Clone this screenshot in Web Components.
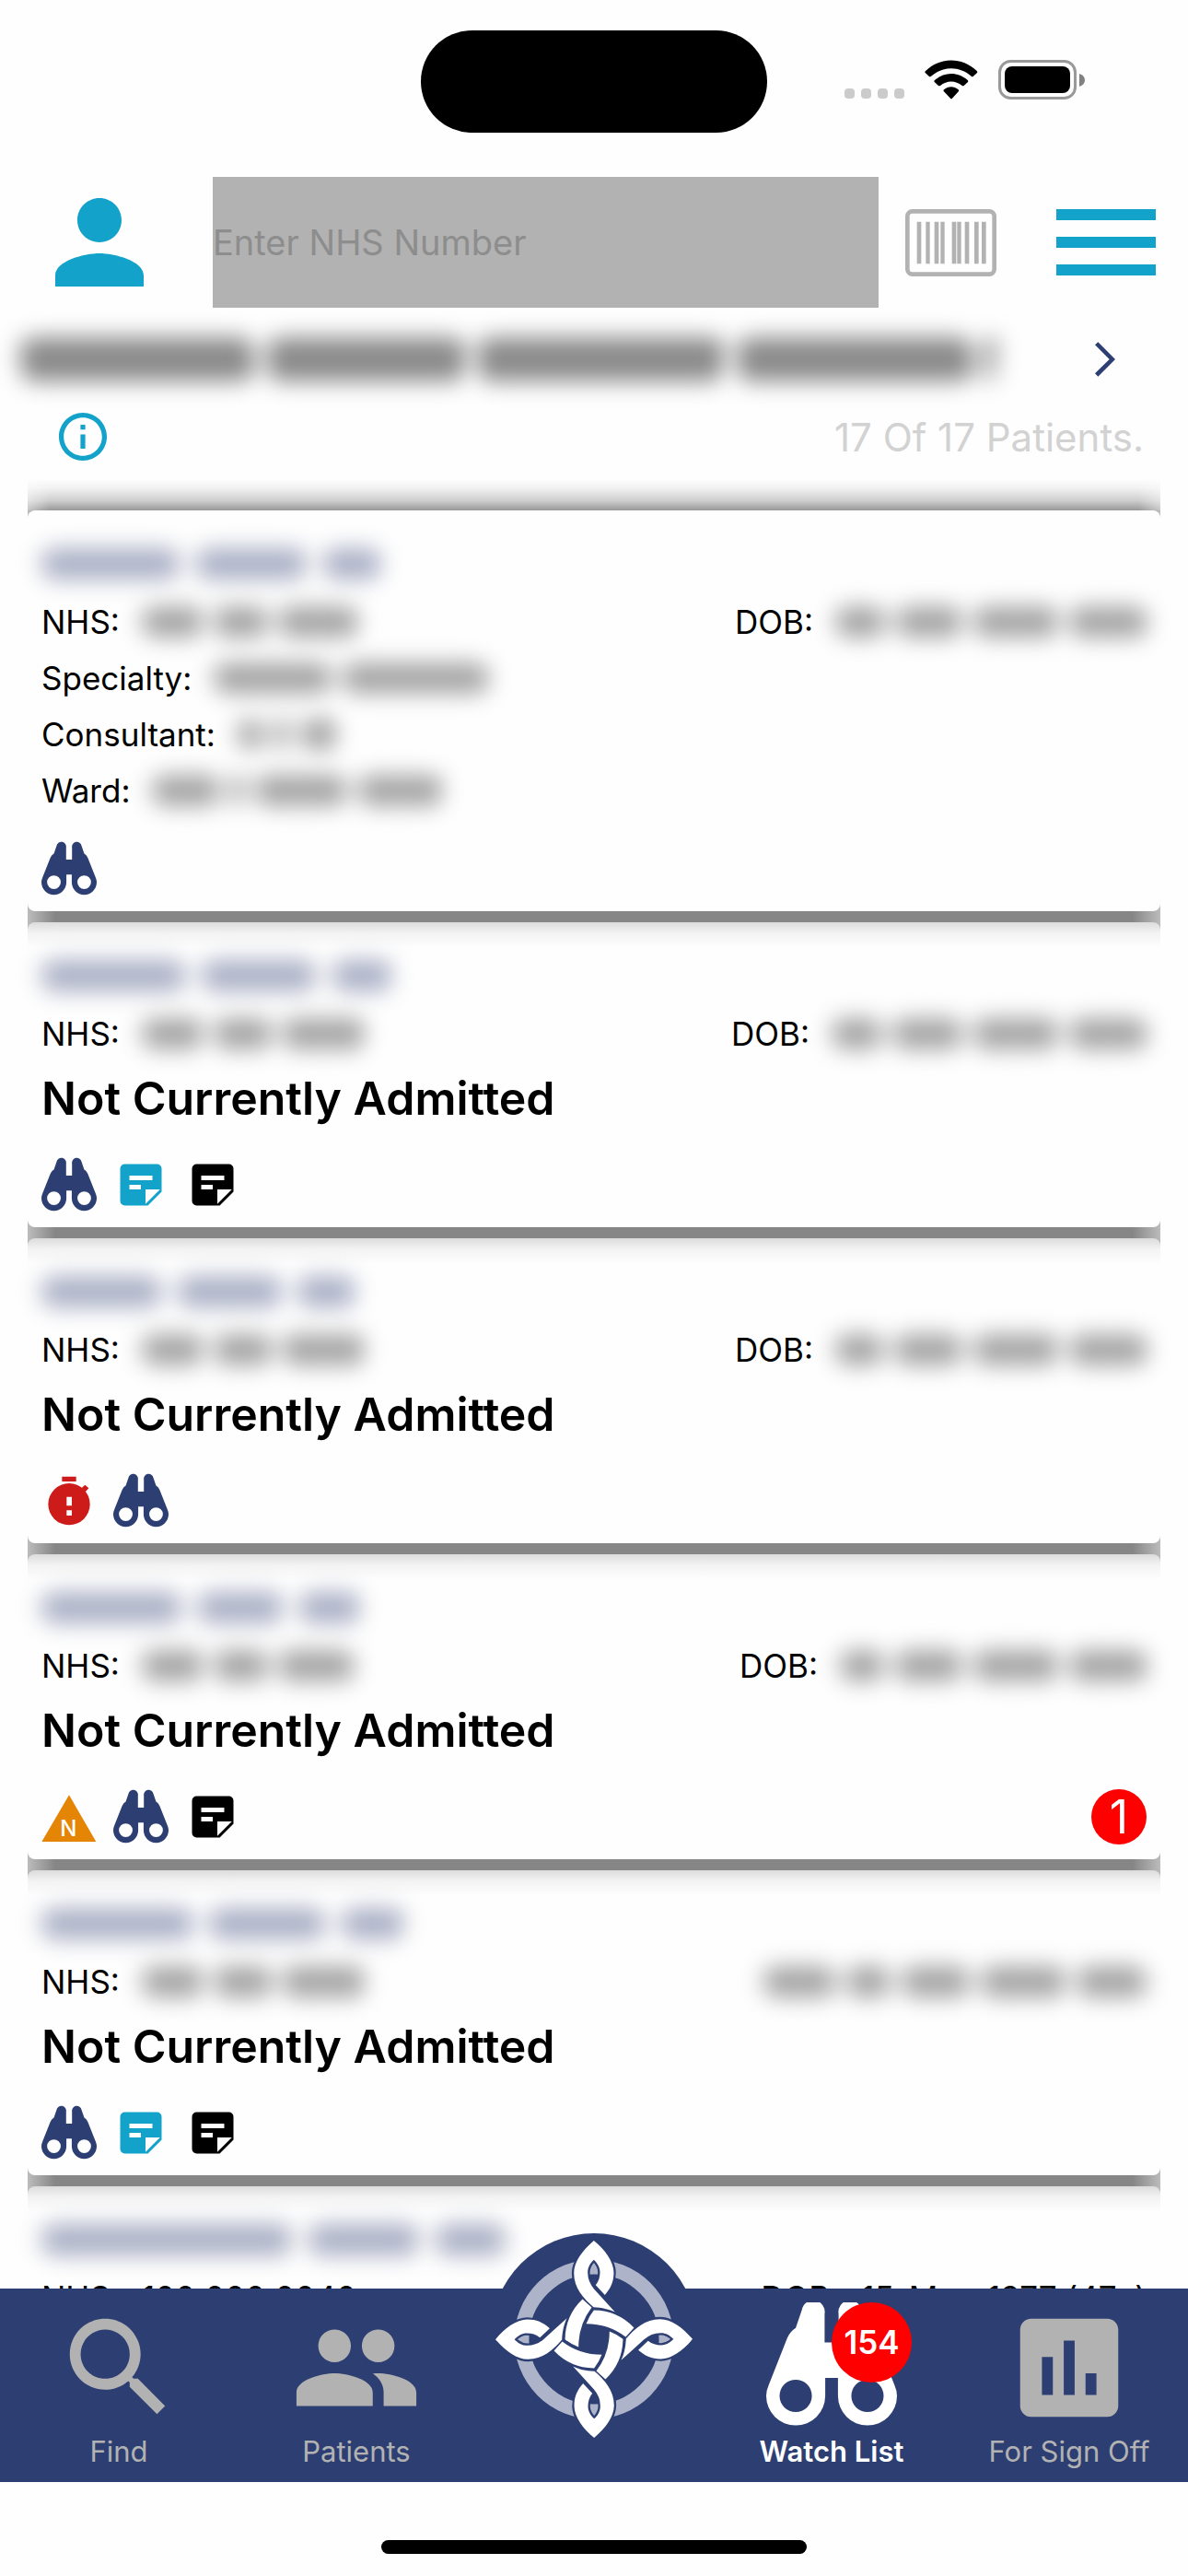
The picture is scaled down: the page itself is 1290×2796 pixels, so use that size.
<!DOCTYPE html>
<html lang="en">
<head>
<meta charset="utf-8">
<meta name="viewport" content="width=device-width, initial-scale=1">
<title>Watch List</title>
<style>
    html, body {
        margin: 0;
        height: 100%;
    }
    body {
        background: #fefefe;
        color: #000;
        font-family: Inter, "Liberation Sans", sans-serif;
        --navy: #2d3e72;
        --cyan: #13a3ca;
        --grey: #b2b2b2;
        --red: #fe0000;
    }
</style>
</head>
<body>

<watch-app></watch-app>

<template id="watch-app-template">
    <style>
        :host {
            display: flex;
            flex-direction: column;
            height: 100vh;
            overflow: hidden;
        }
        main {
            flex: 1;
            min-height: 0;
            overflow: hidden;
        }
        .home {
            display: flex;
            justify-content: center;
            padding: 63px 0 24px;
        }
        .home span {
            width: 462px;
            height: 15px;
            border-radius: 8px;
            background: #000;
        }
    </style>
    <status-bar></status-bar>
    <search-header></search-header>
    <list-summary count="17 Of 17 Patients."></list-summary>
    <main><patient-list></patient-list></main>
    <tab-bar></tab-bar>
    <div class="home"><span></span></div>
</template>

<template id="status-bar-template">
    <style>
        :host {
            display: grid;
            grid-template-columns: 1fr 376px 1fr;
            align-items: center;
            height: 177px;
            box-sizing: border-box;
        }
        .island {
            grid-column: 2;
            height: 111px;
            border-radius: 56px;
            background: #000;
        }
        .signals {
            display: flex;
            align-items: center;
            justify-content: flex-end;
            gap: 22px;
            padding: 0 112px 4px 0;
        }
        svg {
            display: block;
        }
    </style>
    <div class="island"></div>
    <div class="signals">
        <svg width="65" height="43" viewBox="0 0 65 43" fill="#cbcbcb">
            <rect x="0" y="31" width="11" height="11" rx="4"/>
            <rect x="18" y="31" width="11" height="11" rx="4"/>
            <rect x="36" y="31" width="11" height="11" rx="4"/>
            <rect x="54" y="31" width="11" height="11" rx="4"/>
        </svg>
        <svg width="58" height="43" viewBox="0 0 174 129">
            <path d="M2 42Q0 39 3 36C50-10 122-10 170 36Q173 39 171 42L158 54Q155 56 152 53C114 19 60 19 21 53Q18 56 15 54Z"/>
            <path d="M32 72Q30 69 33 66C64 38 109 38 140 66Q143 69 141 72L128 84Q125 86 122 84C101 66 72 66 51 84Q48 86 45 84Z"/>
            <path d="M62 102Q60 99 63 97C77 85 96 85 110 97Q113 99 111 102L90 125Q87 128 84 125Z"/>
        </svg>
        <svg width="94" height="43" viewBox="0 0 94 43">
            <rect x="1.500" y="1.500" width="82" height="40" rx="12" fill="none" stroke="#999" stroke-width="3"/>
            <rect x="7" y="7" width="71" height="29" rx="8"/>
            <path d="M88 15q6 2 6 7t-6 7z" fill="#808080"/>
        </svg>
    </div>
</template>

<template id="search-header-template">
    <style>
        :host {
            display: block;
            padding: 14px 0 0;
        }
        form {
            display: grid;
            grid-template-columns: 216px 1fr 127px 179px;
            column-gap: 15px;
            align-items: center;
            justify-items: center;
            height: 142px;
        }
        button {
            display: block;
            padding: 0;
            border: 0;
            background: none;
            color: var(--cyan);
        }
        svg {
            display: block;
        }
        input {
            width: 100%;
            height: 142px;
            box-sizing: border-box;
            padding: 0;
            border: 0;
            border-radius: 0;
            background: var(--grey);
            font: 38px Inter, sans-serif;
        }
        input::placeholder {
            color: #8d8d8d;
            opacity: 1;
        }
    </style>
    <form>
        <button type="button" aria-label="Profile">
            <svg width="144" height="144" viewBox="0 0 24 24" fill="currentColor"><path d="M12 12c2.210 0 4-1.790 4-4s-1.790-4-4-4-4 1.790-4 4 1.790 4 4 4zm0 2c-2.670 0-8 1.340-8 4v2h16v-2c0-2.660-5.330-4-8-4z"/></svg>
        </button>
        <input type="text" aria-label="NHS Number" placeholder="Enter NHS Number">
        <button type="button" aria-label="Scan barcode">
            <svg width="99" height="73" viewBox="0 0 297 219" fill="#b2b2b2">
                <rect x="7" y="7" width="283" height="205" rx="16" fill="none" stroke="#b2b2b2" stroke-width="14"/>
                <path d="M38 41h14v137H38zM67 41h13v137H67zM95 41h14v137H95zM115 41h13v137h-13zM152 41h14v137h-14zM169 41h13v137h-13zM194 41h14v137h-14zM225 41h14v137h-14zM249 41h14v137h-14z"/>
            </svg>
        </button>
        <button type="button" aria-label="Menu">
            <svg width="144" height="144" viewBox="0 0 24 24" fill="currentColor"><path d="M3 18h18v-2H3v2zm0-5h18v-2H3v2zm0-7v2h18V6H3z"/></svg>
        </button>
    </form>
</template>

<template id="list-summary-template">
    <style>
        :host {
            display: block;
        }
        .row {
            display: flex;
            align-items: center;
            justify-content: space-between;
        }
        .user {
            height: 114px;
            padding: 0 79px 0 22px;
        }
        .user redacted-text {
            --ink: #757575;
            --height: 48px;
            --gap: 14px;
        }
        .count {
            height: 54px;
            padding: 0 48px 0 64px;
            font-size: 42px;
            color: #d2d2d2;
        }
        button {
            display: block;
            padding: 0;
            border: 0;
            background: none;
        }
        svg {
            display: block;
        }
    </style>
    <div class="row user">
        <redacted-text words="254 214 268 256 12"></redacted-text>
        <button type="button" aria-label="Open user">
            <svg width="22" height="38" viewBox="0 0 66 112"><path d="M0 9 10 0 66 56 10 112 0 102 47 56Z" fill="#2d3e72"/></svg>
        </button>
    </div>
    <div class="row count">
        <button type="button" aria-label="Information">
            <svg width="52" height="52" viewBox="2 2 20 20" fill="#13a3ca"><path d="M11 7h2v2h-2zm0 4h2v6h-2zm1-9C6.480 2 2 6.480 2 12s4.480 10 10 10 10-4.480 10-10S17.520 2 12 2zm0 18c-4.410 0-8-3.590-8-8s3.590-8 8-8 8 3.590 8 8-3.590 8-8 8z"/></svg>
        </button>
        <span id="count"></span>
    </div>
</template>

<template id="redacted-text-template">
    <style>
        :host {
            display: flex;
            align-items: center;
            gap: var(--gap, 12px);
            filter: blur(12px);
        }
        span {
            height: var(--height, 34px);
            border-radius: 14px;
            background: repeating-linear-gradient(100deg, var(--ink, #999) 0 10px, #c4c4c4 15px 17px, var(--ink, #999) 22px 25px);
        }
    </style>
</template>

<template id="patient-list-template">
    <style>
        :host {
            display: block;
            padding: 0 30px;
        }
        .shade {
            height: 53px;
            background: linear-gradient(to bottom, transparent 35%, rgba(0, 0, 0, .05) 55%, rgba(0, 0, 0, .19) 80%, rgba(0, 0, 0, .4));
            -webkit-mask: linear-gradient(to right, rgba(0, 0, 0, .55), #000 24px, #000 calc(100% - 24px), rgba(0, 0, 0, .55));
            mask: linear-gradient(to right, rgba(0, 0, 0, .55), #000 24px, #000 calc(100% - 24px), rgba(0, 0, 0, .55));
        }
        /* the stack's shadow shows through the gaps and round the corners */
        .cards {
            display: flex;
            flex-direction: column;
            gap: 12px;
            background: linear-gradient(to right, #bcbcbc, #868686 30px, #868686 calc(100% - 30px), #bcbcbc);
        }
    </style>
    <div class="shade"></div>
    <div class="cards"></div>
</template>

<template id="patient-card-template">
    <style>
        :host {
            display: block;
            padding: 25px 15px 16px;
            border-radius: 8px;
            background: #fefefe;
            font-size: 35px;
        }
        :host([shaded]) {
            background: linear-gradient(to bottom, #dcdcdc, #f3f3f3 12px, #fefefe 28px);
        }
        .row {
            display: flex;
            align-items: center;
            gap: 24px;
            height: 61px;
        }
        .name {
            height: 65px;
        }
        .name redacted-text {
            --ink: #a0a8c6;
            --gap: 18px;
        }
        .dob {
            display: flex;
            align-items: center;
            gap: 24px;
            margin-left: auto;
        }
        .status {
            height: 79px;
            font-size: 50px;
            font-weight: 600;
            display: flex;
            align-items: center;
        }
        .icons {
            display: flex;
            align-items: center;
            gap: 18px;
            height: 60px;
            margin-top: 25px;
        }
        .badge {
            display: flex;
            align-items: center;
            justify-content: center;
            width: 60px;
            height: 60px;
            margin-left: auto;
            border-radius: 50%;
            background: var(--red);
            color: #fff;
            font-size: 50px;
        }
    </style>
</template>

<template id="card-icon-template">
    <style>
        :host {
            display: block;
            width: 60px;
            height: 60px;
        }
        svg {
            display: block;
        }
    </style>
</template>

<template id="tab-bar-template">
    <style>
        :host {
            display: block;
            position: relative;
            background: var(--navy);
        }
        nav {
            display: grid;
            grid-template-columns: repeat(5, 1fr);
            height: 210px;
        }
        /* disc that rises out of the bar behind the logo */
        .logo {
            position: absolute;
            top: -60px;
            left: calc(50% - 112px);
            width: 224px;
            height: 224px;
            border-radius: 50%;
            background: var(--navy);
        }
        .logo svg {
            display: block;
            margin: 8px 5px;
        }
    </style>
    <nav>
        <tab-item icon="search" label="Find"></tab-item>
        <tab-item icon="people" label="Patients"></tab-item>
        <a class="logo" href="#home" aria-label="Home">
            <svg width="214" height="214" viewBox="113 156 643 643">
                <defs>
                    <path id="loop" d="M434 156C395 190 369 225 369 262C369 310 400 345 433 373C460 374 485 380 503 389L466 348L436 315Q414 291 414 260C414 242 422 230 434 218C446 230 454 243 454 258C454 275 450 288 440 301L470 333C490 310 499 290 499 260C499 225 470 185 434 156Z"/>
                    <path id="band" d="M397 347L427 374Q384 430 384 503Q360 494 340 478Q341 400 397 347Z"/>
                    <g id="arm"><use href="#loop"/><use href="#band"/></g>
                </defs>
                <circle cx="434.500" cy="477.500" r="236" fill="none" stroke="#adb4c9" stroke-width="48"/>
                <g fill="#2d3e72" stroke="#2d3e72" stroke-width="14">
                    <use href="#loop"/>
                    <use href="#loop" transform="rotate(90 434.500 477.500)"/>
                    <use href="#loop" transform="rotate(180 434.500 477.500)"/>
                    <use href="#loop" transform="rotate(270 434.500 477.500)"/>
                </g>
                <g fill="#fff">
                    <use href="#arm"/>
                    <use href="#arm" transform="rotate(90 434.500 477.500)"/>
                    <use href="#arm" transform="rotate(180 434.500 477.500)"/>
                    <use href="#arm" transform="rotate(270 434.500 477.500)"/>
                </g>
                <!-- seams where the strands cross -->
                <g fill="none" stroke="#2d3e72" stroke-width="7">
                    <path id="seam" d="M436 308L474 346"/>
                    <use href="#seam" transform="rotate(90 434.500 477.500)"/>
                    <use href="#seam" transform="rotate(180 434.500 477.500)"/>
                    <use href="#seam" transform="rotate(270 434.500 477.500)"/>
                </g>
            </svg>
        </a>
        <tab-item icon="binoculars" label="Watch List" badge="154" active style="grid-column: 4"></tab-item>
        <tab-item icon="chart" label="For Sign Off"></tab-item>
    </nav>
</template>

<template id="tab-item-template">
    <style>
        :host {
            display: block;
            color: var(--grey);
        }
        :host([active]) {
            color: #fff;
            font-weight: 600;
        }
        a {
            display: flex;
            flex-direction: column;
            align-items: center;
            padding-top: 15px;
            color: inherit;
            text-decoration: none;
            font-size: 31px;
            line-height: 40px;
        }
        .icon {
            position: relative;
            width: 142px;
            height: 142px;
        }
        svg {
            display: block;
        }
        .badge {
            position: absolute;
            top: 0;
            right: -16px;
            width: 87px;
            border-radius: 50%;
            background: var(--red);
            color: #fff;
            font-size: 35px;
            line-height: 87px;
            text-align: center;
        }
    </style>
    <a><div class="icon"></div><span></span></a>
</template>

<script>
    'use strict'

    const BINOCULARS = '<path fill="currentColor" fill-rule="evenodd" d="M188 129V37A37 37 0 0 0 115 24L95 82Q78 92 68 114L8 266Q0 284 0 301A95 95 0 0 0 190 301V243H231V301A95 95 0 0 0 421 301Q421 284 413 266L353 114Q343 92 326 82L306 24A37 37 0 0 0 233 37V129ZM43 301a52 52 0 0 0 104 0a52 52 0 0 0-104 0M274 301a52 52 0 0 0 104 0a52 52 0 0 0-104 0Z"/>';
    const NOTE = '<path fill="currentColor" fill-rule="evenodd" d="M19 3H5a2 2 0 0 0-2 2v14a2 2 0 0 0 2 2h10l6-6V5a2 2 0 0 0-2-2zM7 8h10v2H7zM7 12h5v2H7zM14 20.300V14h6.300z"/>';

    const CARD_ICONS = {
        watch: {box: '0 -12 421 421', color: '#2d3e72', art: BINOCULARS},
        note: {box: '0 0 24 24', color: '#13a3ca', art: NOTE},
        noteDark: {box: '0 0 24 24', color: '#000', art: NOTE},
        timer: {
            box: '135 117 180 180',
            color: '#cc1b18',
            art: '<path fill="currentColor" d="M202 128h46v16h-46zM266 165l11-10 12 11-11 12z"/><circle cx="225" cy="218" r="68" fill="currentColor"/><path fill="#fff" d="M217 194h17v29h-17zM217 238h17v17h-17z"/>'
        },
        alert: {
            box: '135 1146 180 180',
            color: '#e58505',
            art: '<path fill="currentColor" d="M225 1165l88 152H136z"/><text x="223" y="1298" fill="#fff" font-size="72" font-weight="500" text-anchor="middle">N</text>'
        }
    };

    const TAB_ICONS = {
        search: {box: '0 0 24 24', art: '<path fill="currentColor" d="M15.500 14h-.790l-.280-.270C15.410 12.590 16 11.110 16 9.500 16 5.910 13.090 3 9.500 3S3 5.910 3 9.500 5.910 16 9.500 16c1.610 0 3.090-.590 4.230-1.570l.270.280v.790l5 4.990L20.490 19l-4.990-5zm-6 0C7.010 14 5 11.990 5 9.500S7.010 5 9.500 5 14 7.010 14 9.500 11.990 14 9.500 14z"/>'},
        people: {box: '0 0 24 24', art: '<path fill="currentColor" d="M16 11c1.660 0 2.990-1.340 2.990-3S17.660 5 16 5s-3 1.340-3 3 1.340 3 3 3zm-8 0c1.660 0 2.990-1.340 2.990-3S9.660 5 8 5 5 6.340 5 8s1.340 3 3 3zm0 2c-2.330 0-7 1.170-7 3.500V19h14v-2.500c0-2.330-4.670-3.500-7-3.500zm8 0c-.290 0-.620.020-.970.050 1.160.840 1.970 1.970 1.970 3.450V19h6v-2.500c0-2.330-4.670-3.500-7-3.500z"/>'},
        binoculars: {box: '0 0 421 421', art: BINOCULARS},
        chart: {box: '0 0 24 24', art: '<path fill="currentColor" d="M19 3H5c-1.100 0-2 .900-2 2v14c0 1.100.900 2 2 2h14c1.100 0 2-.900 2-2V5c0-1.100-.900-2-2-2zM9 17H7v-7h2v7zm4 0h-2V7h2v10zm4 0h-2v-4h2v4z"/>'}
    };

    // Arrays hold the word widths of a redacted value, strings are shown as they are
    const PATIENTS = [
        {
            name: [150, 120, 62],
            nhs: [66, 58, 86],
            dob: [54, 72, 92, 84],
            details: [
                {label: 'Specialty:', value: [128, 158]},
                {label: 'Consultant:', value: [28, 16, 40]},
                {label: 'Ward:', value: [74, 14, 100, 92]}
            ],
            icons: ['watch']
        },
        {name: [156, 124, 64], nhs: [66, 62, 90], dob: [54, 76, 92, 84], status: 'Not Currently Admitted', icons: ['watch', 'note', 'noteDark']},
        {name: [130, 112, 62], nhs: [66, 62, 90], dob: [52, 74, 92, 84], status: 'Not Currently Admitted', icons: ['timer', 'watch']},
        {name: [152, 92, 66], nhs: [66, 58, 82], dob: [48, 73, 92, 84], status: 'Not Currently Admitted', icons: ['alert', 'watch', 'noteDark'], badge: '1'},
        {name: [164, 126, 68], nhs: [66, 62, 90], dob: [78, 48, 74, 92, 76], hideDobLabel: true, status: 'Not Currently Admitted', icons: ['watch', 'note', 'noteDark']},
        {name: [272, 120, 76], nhs: '100 000 0040', dob: '15-May-1977 (47y)', icons: []}
    ];

    class TemplateElement extends HTMLElement {

        constructor () {
            super();
            const template = document.querySelector('#' + this.localName + '-template');
            this.attachShadow({mode: 'open'}).appendChild(template.content.cloneNode(true));
        }

    }

    class RedactedText extends TemplateElement {

        connectedCallback () {
            this.setAttribute('aria-hidden', 'true');
            this.getAttribute('words').split(' ').forEach((width) => {
                const word = document.createElement('span');
                word.style.width = width + 'px';
                this.shadowRoot.appendChild(word);
            });
        }

    }

    class ListSummary extends TemplateElement {

        connectedCallback () {
            this.shadowRoot.querySelector('#count').textContent = this.getAttribute('count');
        }

    }

    class CardIcon extends TemplateElement {

        connectedCallback () {
            const icon = CARD_ICONS[this.getAttribute('name')];
            this.style.color = icon.color;
            this.shadowRoot.innerHTML += `<svg width="60" height="60" viewBox="${icon.box}">${icon.art}</svg>`;
        }

    }

    class PatientCard extends TemplateElement {

        _value (value) {
            return Array.isArray(value)
                ? `<redacted-text words="${value.join(' ')}"></redacted-text>`
                : `<span>${value}</span>`;
        }

        set patient (patient) {
            const details = (patient.details || []).map((item) =>
                `<div class="row"><span>${item.label}</span>${this._value(item.value)}</div>`).join('');
            const icons = patient.icons.map((name) => `<card-icon name="${name}"></card-icon>`).join('');

            this.shadowRoot.innerHTML += `
                <div class="row name">${this._value(patient.name)}</div>
                <div class="row">
                    <span>NHS:</span>${this._value(patient.nhs)}
                    <div class="dob">${patient.hideDobLabel ? '' : '<span>DOB:</span>'}${this._value(patient.dob)}</div>
                </div>
                ${details}
                ${patient.status ? `<div class="status">${patient.status}</div>` : ''}
                <div class="icons">${icons}${patient.badge ? `<span class="badge">${patient.badge}</span>` : ''}</div>`;
        }

    }

    class PatientList extends TemplateElement {

        connectedCallback () {
            const cards = this.shadowRoot.querySelector('.cards');
            PATIENTS.forEach((patient, index) => {
                const card = document.createElement('patient-card');
                card.patient = patient;
                card.toggleAttribute('shaded', index > 0);
                cards.appendChild(card);
            });
        }

    }

    class TabItem extends TemplateElement {

        connectedCallback () {
            const icon = TAB_ICONS[this.getAttribute('icon')];
            const label = this.getAttribute('label');
            const badge = this.getAttribute('badge');
            this.shadowRoot.querySelector('a').href = '#' + this.getAttribute('icon');
            this.shadowRoot.querySelector('a > span').textContent = label;
            this.shadowRoot.querySelector('.icon').innerHTML =
                `<svg width="142" height="142" viewBox="${icon.box}">${icon.art}</svg>` +
                (badge ? `<span class="badge">${badge}</span>` : '');
        }

    }

    customElements.define('redacted-text', RedactedText);
    customElements.define('card-icon', CardIcon);
    customElements.define('patient-card', PatientCard);
    customElements.define('patient-list', PatientList);
    customElements.define('list-summary', ListSummary);
    customElements.define('status-bar', class extends TemplateElement {});
    customElements.define('search-header', class extends TemplateElement {});
    customElements.define('tab-item', TabItem);
    customElements.define('tab-bar', class extends TemplateElement {});
    customElements.define('watch-app', class extends TemplateElement {});
</script>
</body>
</html>
